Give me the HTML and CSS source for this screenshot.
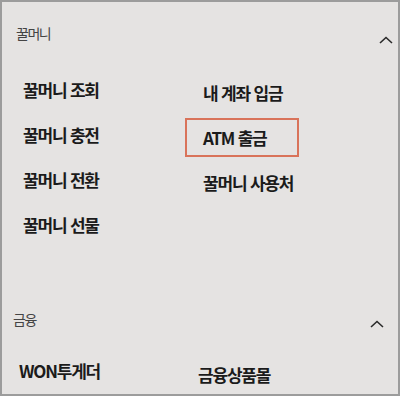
FILE: index.html
```html
<!DOCTYPE html>
<html lang="ko">
<head>
<meta charset="utf-8">
<title>메뉴</title>
<link rel="stylesheet" href="styles.css">
</head>
<body>
<div class="frame">
  <section class="section section-first">
    <div class="section-head head-first">
      <span class="section-title">꿀머니</span>
      <svg class="chevron chevron-first" width="14" height="8" viewBox="0 0 14 8"><polyline points="1,7 7,1.5 13,7" fill="none" stroke="#2a2a2a" stroke-width="1.6"/></svg>
    </div>
    <div class="menu menu-first">
      <div class="col">
        <span class="item">꿀머니 조회</span>
        <span class="item">꿀머니 충전</span>
        <span class="item">꿀머니 전환</span>
        <span class="item">꿀머니 선물</span>
      </div>
      <div class="col col-right">
        <span class="item">내 계좌 입금</span>
        <span class="item item-marked">ATM 출금</span>
        <span class="item">꿀머니 사용처</span>
      </div>
    </div>
  </section>
  <section class="section section-second">
    <div class="section-head head-second">
      <span class="section-title">금융</span>
      <svg class="chevron chevron-second" width="14" height="8" viewBox="0 0 14 8"><polyline points="1,7 7,1.5 13,7" fill="none" stroke="#2a2a2a" stroke-width="1.6"/></svg>
    </div>
    <div class="menu menu-second">
      <div class="col">
        <span class="item">WON투게더</span>
      </div>
      <div class="col col-right2">
        <span class="item">금융상품몰</span>
      </div>
    </div>
  </section>
</div>
</body>
</html>
```

FILE: styles.css
```css
html, body {
  margin: 0;
  padding: 0;
  background: #e5e3e3;
}
.frame {
  width: 400px;
  height: 396px;
  box-sizing: border-box;
  border: 2px solid #9c9c9c;
  background: #e5e3e2;
  overflow: hidden;
  font-family: "Noto Sans CJK KR", "Noto Sans", sans-serif;
  color: #1b1b1b;
}
.section-first {
  padding-top: 21px;
}
.section-second {
  margin-top: 72px;
}
.section-head {
  display: flex;
  justify-content: space-between;
  align-items: flex-start;
  height: 20px;
}
.head-first {
  padding-left: 14px;
  padding-right: 5px;
}
.head-second {
  padding-left: 11px;
  padding-right: 14px;
}
.section-title {
  font-size: 14px;
  line-height: 20px;
  letter-spacing: -1.5px;
  color: #444444;
}
.chevron {
  display: block;
}
.chevron-first {
  margin-top: 13px;
}
.chevron-second {
  margin-top: 11px;
}
.menu {
  display: grid;
}
.menu-first {
  grid-template-columns: 180px 1fr;
  padding-top: 35px;
  padding-left: 21px;
}
.menu-second {
  grid-template-columns: 179px 1fr;
  padding-top: 30px;
  padding-left: 17px;
}
.col {
  display: flex;
  flex-direction: column;
  align-items: flex-start;
  gap: 21px;
}
.col-right {
  padding-top: 3px;
}
.col-right2 {
  padding-top: 4px;
}
.item {
  font-size: 17px;
  font-weight: 700;
  line-height: 24px;
  letter-spacing: -1.2px;
  white-space: nowrap;
}
.item-marked {
  position: relative;
}
.item-marked::after {
  content: "";
  position: absolute;
  left: -18px;
  top: -8px;
  width: 114px;
  height: 39px;
  box-sizing: border-box;
  border: 2px solid #d9735a;
}
```
